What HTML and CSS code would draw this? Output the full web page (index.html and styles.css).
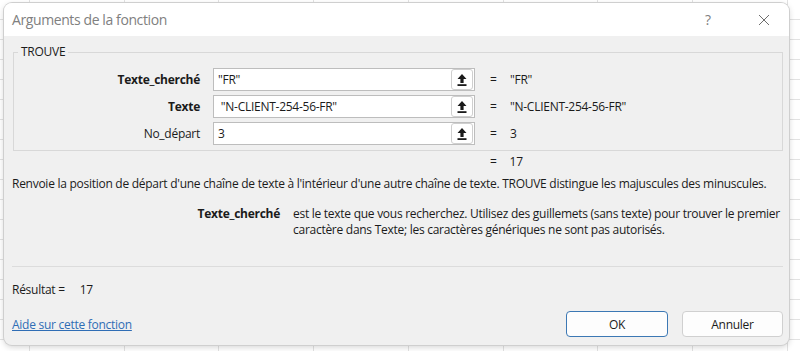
FILE: index.html
```html
<!DOCTYPE html>
<html lang="fr">
<head>
<meta charset="utf-8">
<title>Arguments de la fonction</title>
<link rel="stylesheet" href="styles.css">
</head>
<body>
<div class="dialog">
  <div class="titlebar">
    <span class="title">Arguments de la fonction</span>
    <span class="help">?</span>
    <span class="close"><svg width="12" height="12" viewBox="0 0 12 12"><path d="M1 1L11 11M11 1L1 11" stroke="#6e6e6e" stroke-width="1" fill="none"/></svg></span>
  </div>
  <div class="content">
    <fieldset class="group">
      <legend>TROUVE</legend>
      <div class="args">
        <div class="lbl bold">Texte_cherché</div>
        <div class="field"><span class="val">"FR"</span><span class="ref"><svg width="10" height="12" viewBox="0 0 10 12"><path d="M5 0L0.5 5H3.4V9H6.6V5H9.5Z" fill="#1a1a1a"/><rect x="0.5" y="10.2" width="9" height="1.8" fill="#1a1a1a"/></svg></span></div>
        <div class="eq">=</div>
        <div class="res">"FR"</div>

        <div class="lbl bold">Texte</div>
        <div class="field"><span class="val">&nbsp;"N-CLIENT-254-56-FR"</span><span class="ref"><svg width="10" height="12" viewBox="0 0 10 12"><path d="M5 0L0.5 5H3.4V9H6.6V5H9.5Z" fill="#1a1a1a"/><rect x="0.5" y="10.2" width="9" height="1.8" fill="#1a1a1a"/></svg></span></div>
        <div class="eq">=</div>
        <div class="res">"N-CLIENT-254-56-FR"</div>

        <div class="lbl">No_départ</div>
        <div class="field"><span class="val">3</span><span class="ref"><svg width="10" height="12" viewBox="0 0 10 12"><path d="M5 0L0.5 5H3.4V9H6.6V5H9.5Z" fill="#1a1a1a"/><rect x="0.5" y="10.2" width="9" height="1.8" fill="#1a1a1a"/></svg></span></div>
        <div class="eq">=</div>
        <div class="res">3</div>
      </div>
    </fieldset>
    <div class="total"><span class="teq">=</span><span>17</span></div>
    <p class="desc">Renvoie la position de départ d'une chaîne de texte à l'intérieur d'une autre chaîne de texte. TROUVE distingue les majuscules des minuscules.</p>
    <div class="arghelp">
      <div class="argname">Texte_cherché</div>
      <div class="argdesc">est le texte que vous recherchez. Utilisez des guillemets (sans texte) pour trouver le premier<br>caractère dans Texte; les caractères génériques ne sont pas autorisés.</div>
    </div>
    <div class="sep"></div>
    <div class="result"><span>Résultat =</span><span class="rval">17</span></div>
    <div class="footer">
      <a class="link" href="#">Aide sur cette fonction</a>
      <div class="buttons">
        <button class="btn ok">OK</button>
        <button class="btn">Annuler</button>
      </div>
    </div>
  </div>
</div>
</body>
</html>
```
FILE: styles.css
```css
* { box-sizing: border-box; }
html, body { height: 100%; }
body {
  margin: 0;
  padding: 3px 0 0 4px;
  overflow: hidden;
  font-family: "Open Sans", "Noto Sans", sans-serif;
  font-size: 12px;
  letter-spacing: -0.27px;
  color: #1b1b1b;
  background-color: #ffffff;
  background-image:
    repeating-linear-gradient(90deg, transparent 0, transparent 29px, #e2e2e2 29px, #e2e2e2 30px, transparent 30px, transparent 94.75px),
    repeating-linear-gradient(180deg, transparent 0, transparent 19px, #e2e2e2 19px, #e2e2e2 20px);
}
.dialog {
  width: 785px;
  height: 342px;
  background: #f0f0f0;
  border-radius: 8px;
  overflow: hidden;
  box-shadow: 0 0 0 1px #cfcfcf, 0 2px 6px rgba(0,0,0,0.18);
  display: flex;
  flex-direction: column;
}
.titlebar {
  height: 33px;
  flex: none;
  background: #ffffff;
  display: flex;
  align-items: center;
  padding-left: 8px;
}
.title {
  font-size: 14px;
  letter-spacing: -0.4px;
  color: #808080;
  flex: 1;
}
.help {
  font-size: 14px;
  color: #808080;
  width: 53px;
}
.close {
  width: 31px;
  display: flex;
  align-items: center;
}
.content {
  padding: 0 6px 0 8px;
  flex: 1;
  display: flex;
  flex-direction: column;
}
.group {
  margin: 8px 0 0 1px;
  padding: 0 0 5px 0;
  border: 1px solid #d8d8d8;
  min-width: 0;
}
.group legend {
  margin-left: 4px;
  padding: 0 3px;
  line-height: 16px;
  font-size: 12px;
}
.args {
  display: grid;
  grid-template-columns: 199px 262px 35px auto;
  grid-auto-rows: 23px;
  row-gap: 4px;
  padding-top: 8px;
  align-items: center;
}
.lbl {
  text-align: right;
  padding-right: 13px;
}
.bold { font-weight: 700; }
.field {
  height: 23px;
  background: #ffffff;
  border: 1px solid #bdbdbd;
  display: flex;
  align-items: center;
  justify-content: space-between;
  padding: 0 1px 0 4px;
}
.ref {
  width: 22px;
  height: 21px;
  border: 1px solid #cfcfcf;
  border-radius: 3px;
  background: #ffffff;
  display: flex;
  align-items: center;
  justify-content: center;
}
.eq { padding-left: 15px; }
.total {
  margin-top: 3px;
  line-height: 16px;
  padding-left: 478px;
  display: flex;
  gap: 13px;
}
.desc {
  margin: 6px 0 0 0;
  line-height: 16px;
  white-space: nowrap;
}
.arghelp {
  margin-top: 14px;
  display: grid;
  grid-template-columns: 268px 1fr;
  column-gap: 13px;
  line-height: 16px;
}
.argname {
  font-weight: 700;
  text-align: right;
}
.argdesc { white-space: nowrap; }
.sep {
  margin-top: 28px;
  border-top: 1px solid #dcdcdc;
}
.result {
  margin-top: 15px;
  line-height: 16px;
  display: flex;
  gap: 15px;
}
.footer {
  margin-top: 13px;
  display: flex;
  align-items: center;
  justify-content: space-between;
}
.link {
  color: #2f6db5;
  text-decoration: underline;
}
.buttons {
  display: flex;
  gap: 14px;
}
.btn {
  width: 101px;
  height: 26px;
  font-family: inherit;
  font-size: 12px;
  letter-spacing: -0.27px;
  color: #1b1b1b;
  background: #fdfdfd;
  border: 1px solid #d0d0d0;
  border-radius: 4px;
}
.btn.ok {
  width: 102px;
  border-color: #3c78b4;
}
```
